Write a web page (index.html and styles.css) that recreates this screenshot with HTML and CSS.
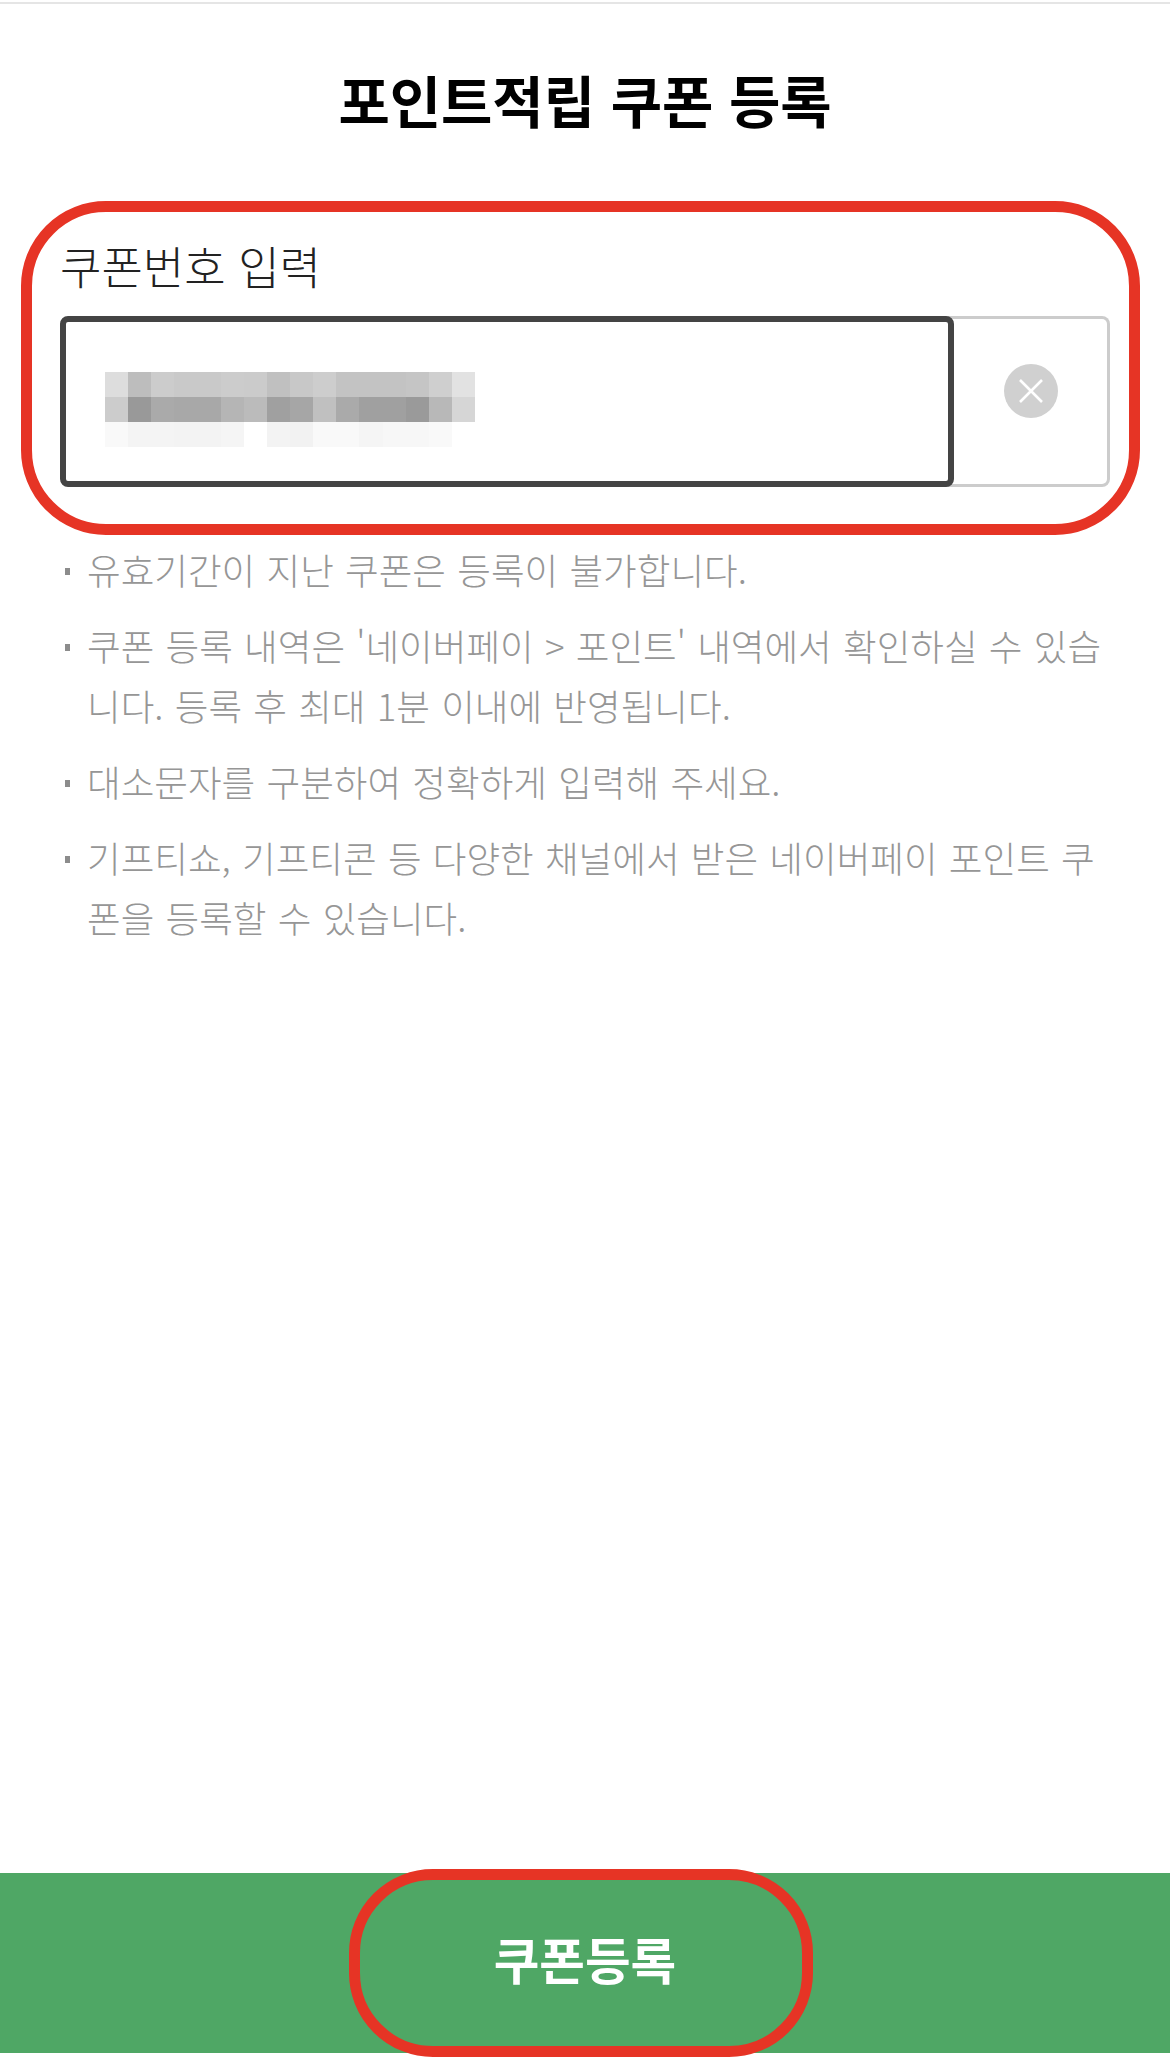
FILE: index.html
```html
<!DOCTYPE html>
<html lang="ko">
<head>
    <meta charset="UTF-8">
    <meta name="viewport" content="width=device-width, initial-scale=1.0">
    <title>포인트적립 쿠폰 등록</title>
    <link rel="stylesheet" href="styles.css">
</head>

<body>
    <div class="page">
        <div class="top-line"></div>
        <h1 class="title">포인트적립 쿠폰 등록</h1>

        <div class="coupon-form">
            <div class="mark mark-form"></div>
            <label class="label">쿠폰번호 입력</label>
            <div class="field">
                <div class="field-input">
                    <svg class="blur" viewBox="0 0 16 3" preserveAspectRatio="none" shape-rendering="crispEdges">
                        <rect x="0" y="0" width="1" height="1" fill="#dddddd"/>
                        <rect x="1" y="0" width="1" height="1" fill="#bdbdbd"/>
                        <rect x="2" y="0" width="1" height="1" fill="#cccccc"/>
                        <rect x="3" y="0" width="1" height="1" fill="#c9c9c9"/>
                        <rect x="4" y="0" width="1" height="1" fill="#c9c9c9"/>
                        <rect x="5" y="0" width="1" height="1" fill="#cccccc"/>
                        <rect x="6" y="0" width="1" height="1" fill="#cbcbcb"/>
                        <rect x="7" y="0" width="1" height="1" fill="#c0c0c0"/>
                        <rect x="8" y="0" width="1" height="1" fill="#c8c8c8"/>
                        <rect x="9" y="0" width="1" height="1" fill="#cdcdcd"/>
                        <rect x="10" y="0" width="1" height="1" fill="#c3c3c3"/>
                        <rect x="11" y="0" width="1" height="1" fill="#c3c3c3"/>
                        <rect x="12" y="0" width="1" height="1" fill="#c3c3c3"/>
                        <rect x="13" y="0" width="1" height="1" fill="#c5c5c5"/>
                        <rect x="14" y="0" width="1" height="1" fill="#cfcfcf"/>
                        <rect x="15" y="0" width="1" height="1" fill="#e2e2e2"/>
                        <rect x="0" y="1" width="1" height="1" fill="#cccccc"/>
                        <rect x="1" y="1" width="1" height="1" fill="#999999"/>
                        <rect x="2" y="1" width="1" height="1" fill="#aaaaaa"/>
                        <rect x="3" y="1" width="1" height="1" fill="#a8a8a8"/>
                        <rect x="4" y="1" width="1" height="1" fill="#a8a8a8"/>
                        <rect x="5" y="1" width="1" height="1" fill="#b5b5b5"/>
                        <rect x="6" y="1" width="1" height="1" fill="#bbbbbb"/>
                        <rect x="7" y="1" width="1" height="1" fill="#a0a0a0"/>
                        <rect x="8" y="1" width="1" height="1" fill="#a6a6a6"/>
                        <rect x="9" y="1" width="1" height="1" fill="#c0c0c0"/>
                        <rect x="10" y="1" width="1" height="1" fill="#aaaaaa"/>
                        <rect x="11" y="1" width="1" height="1" fill="#a0a0a0"/>
                        <rect x="12" y="1" width="1" height="1" fill="#a0a0a0"/>
                        <rect x="13" y="1" width="1" height="1" fill="#9a9a9a"/>
                        <rect x="14" y="1" width="1" height="1" fill="#b8b8b8"/>
                        <rect x="15" y="1" width="1" height="1" fill="#d6d6d6"/>
                        <rect x="0" y="2" width="1" height="1" fill="#f9f9f9"/>
                        <rect x="1" y="2" width="1" height="1" fill="#f4f4f4"/>
                        <rect x="2" y="2" width="1" height="1" fill="#f4f4f4"/>
                        <rect x="3" y="2" width="1" height="1" fill="#f3f3f3"/>
                        <rect x="4" y="2" width="1" height="1" fill="#f3f3f3"/>
                        <rect x="5" y="2" width="1" height="1" fill="#f5f5f5"/>
                        <rect x="7" y="2" width="1" height="1" fill="#f3f3f3"/>
                        <rect x="8" y="2" width="1" height="1" fill="#f2f2f2"/>
                        <rect x="9" y="2" width="1" height="1" fill="#f9f9f9"/>
                        <rect x="10" y="2" width="1" height="1" fill="#f9f9f9"/>
                        <rect x="11" y="2" width="1" height="1" fill="#f5f5f5"/>
                        <rect x="12" y="2" width="1" height="1" fill="#f7f7f7"/>
                        <rect x="13" y="2" width="1" height="1" fill="#f7f7f7"/>
                        <rect x="14" y="2" width="1" height="1" fill="#f9f9f9"/>
                    </svg>
                </div>
                <div class="field-clear">
                    <svg class="clear-icon" viewBox="0 0 54 54">
                        <circle cx="27" cy="27" r="27" fill="#d0d0d0"/>
                        <path d="M16 16 L38 38 M38 16 L16 38" stroke="#fff" stroke-width="2.6" fill="none"/>
                    </svg>
                </div>
            </div>
        </div>

        <ul class="notice">
            <li>유효기간이 지난 쿠폰은 등록이 불가합니다.</li>
            <li>쿠폰 등록 내역은 '네이버페이 &gt; 포인트' 내역에서 확인하실 수 있습니다. 등록 후 최대 1분 이내에 반영됩니다.</li>
            <li>대소문자를 구분하여 정확하게 입력해 주세요.</li>
            <li>기프티쇼, 기프티콘 등 다양한 채널에서 받은 네이버페이 포인트 쿠폰을 등록할 수 있습니다.</li>
        </ul>

        <div class="submit-bar">
            <button class="submit" type="button">쿠폰등록</button>
            <div class="mark mark-submit"></div>
        </div>
    </div>
</body>
</html>
```

FILE: styles.css
```css
*, *:before, *:after {
    box-sizing: border-box;
}

body {
    margin: 0;
    background-color: #fff;
    font-family: "Noto Sans CJK KR", "Noto Sans", sans-serif;
}

.page {
    display: flex;
    flex-direction: column;
    height: 2065px;
    padding: 2px 0 12px 0;
    overflow: hidden;
}

.top-line {
    height: 2px;
    background-color: #e5e5e5;
}

.title {
    margin: 65px 0 0 0;
    font-size: 55.8px;
    line-height: 60px;
    font-weight: 700;
    text-align: center;
    color: #000;
}

/* input block */
.coupon-form {
    position: relative;
    margin: 112px 60px 0 60px;
}

.label {
    display: block;
    height: 75px;
    font-size: 45px;
    font-weight: 300;
    line-height: 50px;
    color: #222;
}

.field {
    display: flex;
    height: 171px;
}

.field-input {
    position: relative;
    z-index: 1;
    flex: none;
    display: flex;
    align-items: center;
    width: 894px;
    padding: 16px 0 0 39px;
    border: 6px solid #444;
    border-radius: 8px;
    background-color: #fff;
}

.blur {
    display: block;
    width: 370px;
    height: 75px;
}

.field-clear {
    flex: 1;
    display: flex;
    align-items: center;
    justify-content: center;
    margin-left: -8px;
    padding: 0 0 21px 8px;
    border: 3px solid #ccc;
    border-left: none;
    border-radius: 0 8px 8px 0;
}

.clear-icon {
    display: block;
    width: 54px;
    height: 54px;
}

/* notes under the input */
.notice {
    margin: 53px 60px 0 60px;
    padding: 0;
    list-style: none;
    font-size: 36.6px;
    font-weight: 300;
    word-spacing: 1px;
    line-height: 60px;
    color: #969696;
    word-break: break-all;
}

.notice li {
    position: relative;
    padding-left: 27px;
    margin-bottom: 16px;
}

.notice li:before {
    content: "";
    position: absolute;
    top: 28px;
    left: 5px;
    width: 5px;
    height: 7px;
    background-color: #8c8c8c;
}

/* bottom button */
.submit-bar {
    position: relative;
    margin-top: auto;
    height: 180px;
}

.submit {
    display: block;
    width: 100%;
    height: 100%;
    border: 0;
    padding: 0 0 10px 0;
    background-color: #4fa765;
    color: #fff;
    font-family: inherit;
    font-size: 49.6px;
    font-weight: 700;
}

/* red annotation outlines */
.mark {
    position: absolute;
    border: 11px solid #e63425;
    pointer-events: none;
}

.mark-form {
    top: -40px;
    bottom: -48px;
    left: -39px;
    right: -30px;
    border-radius: 85px;
}

.mark-submit {
    top: -4px;
    bottom: -4px;
    left: 349px;
    width: 464px;
    border-radius: 84px;
}
```
